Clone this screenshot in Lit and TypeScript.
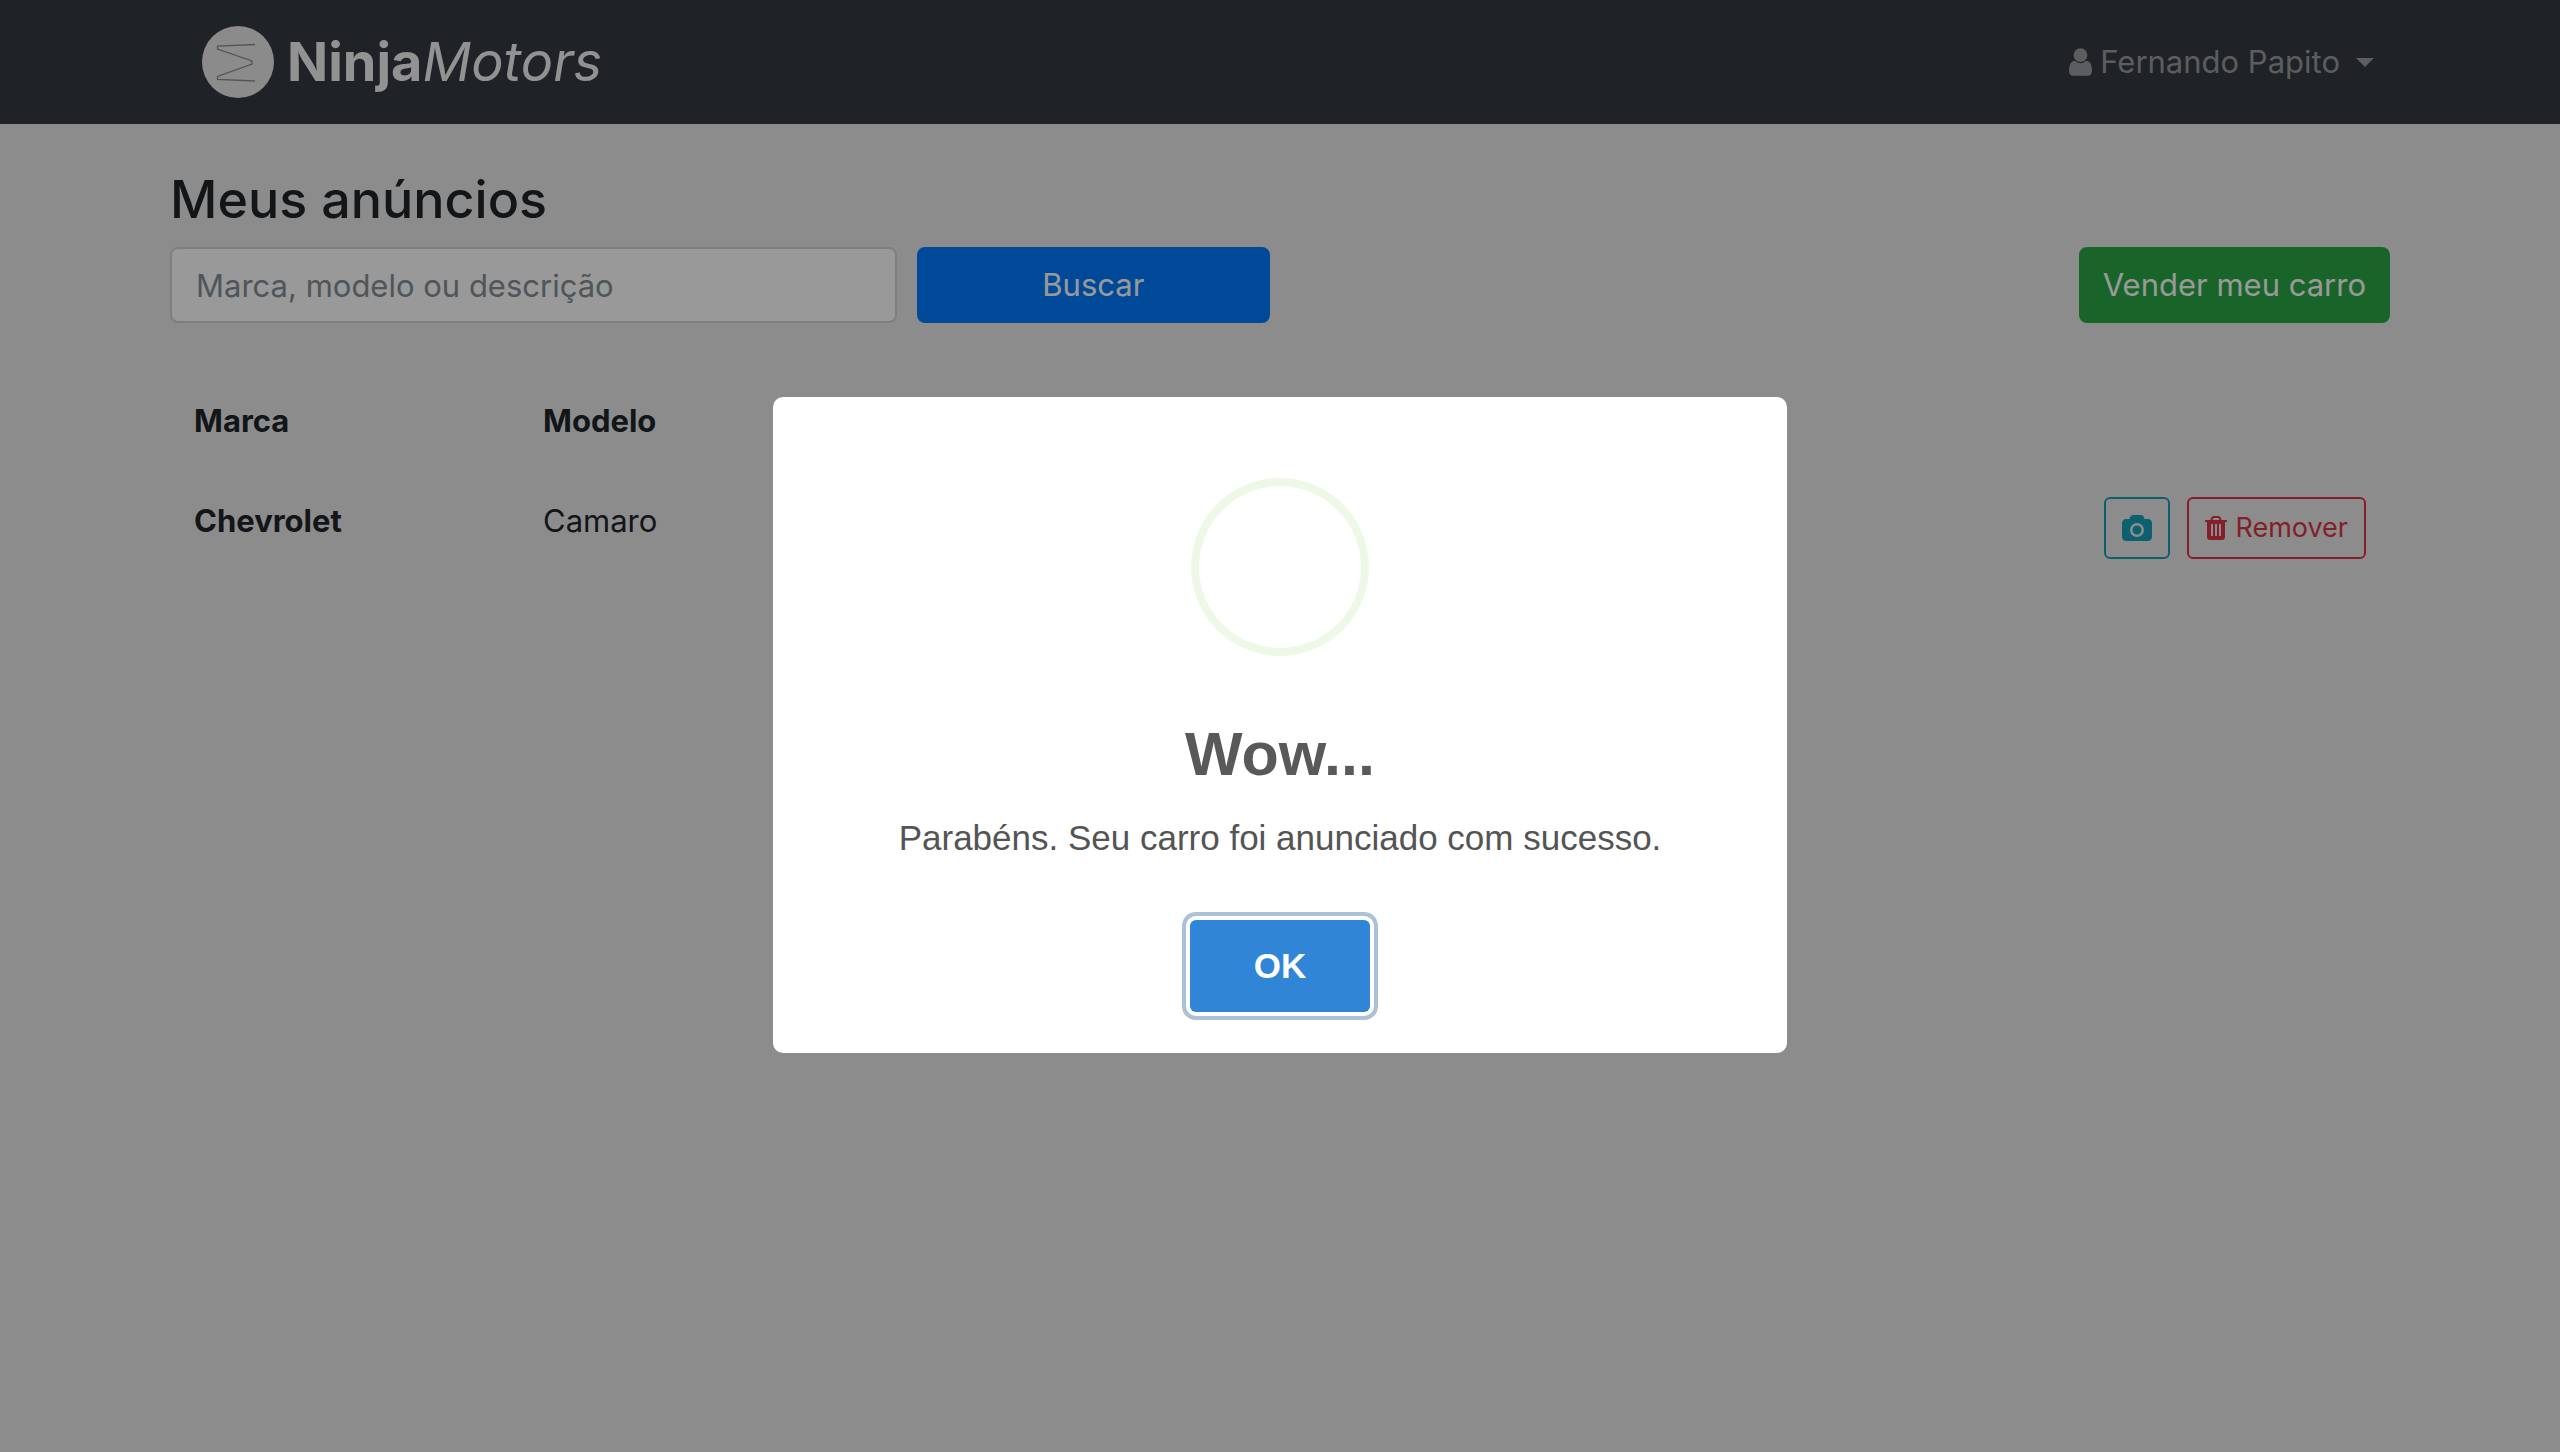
import { LitElement, html, css, svg } from "lit";
import { customElement, state } from "lit/decorators.js";

interface Ad {
  brand: string;
  model: string;
}

const userIcon = svg`<path d="M1280 1399q0 109-62.5 187t-150.5 78h-854q-88 0-150.5-78t-62.5-187q0-85 8.5-160.5t31.5-152 58.5-131 94-89 134.5-34.5q131 128 313 128t313-128q76 0 134.5 34.5t94 89 58.5 131 31.5 152 8.5 160.5zM1024 512q0 159-112.5 271.5t-271.5 112.5-271.5-112.5-112.5-271.5 112.5-271.5 271.5-112.5 271.5 112.5 112.5 271.5z"/>`;
const cameraIcon = svg`<path d="M960 672q119 0 203.5 84.5t84.5 203.5-84.5 203.5-203.5 84.5-203.5-84.5-84.5-203.5 84.5-203.5 203.5-84.5zm704-416q106 0 181 75t75 181v896q0 106-75 181t-181 75h-1408q-106 0-181-75t-75-181v-896q0-106 75-181t181-75h224l51-136q19-49 69.5-84.5t103.5-35.5h512q53 0 103.5 35.5t69.5 84.5l51 136h224zm-704 1152q185 0 316.5-131.5t131.5-316.5-131.5-316.5-316.5-131.5-316.5 131.5-131.5 316.5 131.5 316.5 316.5 131.5z"/>`;
const trashIcon = svg`<path d="M512 1376v-704q0-14-9-23t-23-9h-64q-14 0-23 9t-9 23v704q0 14 9 23t23 9h64q14 0 23-9t9-23zm256 0v-704q0-14-9-23t-23-9h-64q-14 0-23 9t-9 23v704q0 14 9 23t23 9h64q14 0 23-9t9-23zm256 0v-704q0-14-9-23t-23-9h-64q-14 0-23 9t-9 23v704q0 14 9 23t23 9h64q14 0 23-9t9-23zm-544-992h448l-48-117q-7-9-17-11h-317q-10 2-17 11zm928 32v64q0 14-9 23t-23 9h-96v948q0 83-47 143.5t-113 60.5h-832q-66 0-113-58.5t-47-141.5v-952h-96q-14 0-23-9t-9-23v-64q0-14 9-23t23-9h309l70-167q15-37 54-63t79-26h320q40 0 79 26t54 63l70 167h309q14 0 23 9t9 23z"/>`;

@customElement("app-root")
export class AppRoot extends LitElement {
  @state() private dialogOpen = true;
  @state() private ads: Ad[] = [{ brand: "Chevrolet", model: "Camaro" }];

  static styles = css`
    :host {
      display: block;
      min-height: 100vh;
      background: #eaeaea;
      color: #212529;
      font-family: Inter, "Liberation Sans", sans-serif;
      font-size: 31px;
      line-height: 48px;
    }
    * {
      box-sizing: border-box;
    }
    button,
    input {
      font: inherit;
      margin: 0;
    }
    button {
      cursor: pointer;
    }
    svg {
      display: block;
      fill: currentColor;
      flex: none;
    }
    .container {
      max-width: 2220px;
      margin: 0 auto;
    }
    .navbar {
      background: #343a40;
    }
    .bar {
      display: flex;
      align-items: center;
      justify-content: space-between;
      padding: 0 16px 0 32px;
      height: 124px;
    }
    .brand {
      display: flex;
      align-items: center;
      gap: 13px;
      color: #f4f4f4;
      text-decoration: none;
      font-size: 54px;
      line-height: 64px;
    }
    .brand b {
      font-weight: 700;
    }
    .brand i {
      font-weight: 400;
    }
    .user {
      display: flex;
      align-items: center;
      gap: 8px;
      padding: 0;
      border: 0;
      background: none;
      color: #9a9c9e;
    }
    .caret {
      margin-left: 8px;
      border: 9px solid transparent;
      border-top-color: currentColor;
      border-bottom: 0;
    }
    h1 {
      margin: 0;
      padding: 42px 0 14px;
      font-size: 52px;
      line-height: 67px;
      font-weight: 500;
    }
    .search {
      display: grid;
      grid-template-columns: repeat(12, 1fr);
      gap: 20px;
    }
    .field {
      grid-column: span 4;
      min-width: 0;
      height: 76px;
      padding: 0 24px;
      border: 2px solid #ced4da;
      border-radius: 8px;
      background: #fff;
      color: #495057;
    }
    .field::placeholder {
      color: #868e96;
      opacity: 1;
    }
    .btn {
      display: flex;
      align-items: center;
      justify-content: center;
      height: 76px;
      padding: 0 22px;
      border: 2px solid;
      border-radius: 8px;
      color: #fff;
      white-space: nowrap;
    }
    .primary {
      grid-column: span 2;
      background: #007bff;
      border-color: #007bff;
    }
    .success {
      grid-column: span 6;
      justify-self: end;
      background: #28a745;
      border-color: #28a745;
    }
    table {
      width: 100%;
      margin-top: 50px;
      border-collapse: collapse;
      table-layout: fixed;
    }
    th,
    td {
      padding: 24px;
      text-align: left;
      vertical-align: top;
    }
    th {
      font-weight: 700;
    }
    thead th,
    thead td {
      border-bottom: 4px solid #e9e9e9;
    }
    .col {
      width: 349px;
    }
    .actions {
      display: flex;
      justify-content: flex-end;
      gap: 17px;
    }
    .small {
      height: 62px;
      padding: 0 16px;
      gap: 8px;
      border-radius: 6px;
      background: none;
      font-size: 27px;
    }
    .info {
      color: #17a2b8;
      border-color: #17a2b8;
    }
    .danger {
      color: #dc3545;
      border-color: #dc3545;
    }
    .backdrop {
      position: fixed;
      inset: 0;
      display: flex;
      align-items: center;
      justify-content: center;
      padding-bottom: 2px;
      background: rgba(0, 0, 0, 0.4);
    }
    .dialog {
      display: flex;
      flex-direction: column;
      align-items: center;
      width: 1014px;
      max-width: 96%;
      padding: 81px 40px 41px;
      border-radius: 10px;
      background: #fff;
      font-family: "Liberation Sans", sans-serif;
      text-align: center;
    }
    .ring {
      width: 178px;
      height: 178px;
      border: 8px solid #edf8e7;
      border-radius: 50%;
    }
    .dialog h2 {
      margin: 60px 0 0;
      color: #595959;
      font-size: 61px;
      line-height: 76px;
      font-weight: 700;
    }
    .dialog p {
      margin: 20px 0 56px;
      color: #545454;
      font-size: 35px;
      line-height: 52px;
    }
    .ok {
      width: 180px;
      height: 92px;
      border: 0;
      border-radius: 6px;
      background: #3085d6;
      color: #fff;
      font-size: 35px;
      font-weight: 700;
      outline: none;
      box-shadow: 0 0 0 4px #fff, 0 0 0 8px #abc1d8;
    }
  `;

  private close() {
    this.dialogOpen = false;
  }

  private remove(ad: Ad) {
    this.ads = this.ads.filter((item) => item !== ad);
  }

  private renderRow(ad: Ad) {
    return html`<tr>
      <th scope="row">${ad.brand}</th>
      <td>${ad.model}</td>
      <td>
        <div class="actions">
          <button class="btn small info" type="button" aria-label="Fotos">
            <svg width="30" height="26" viewBox="0 0 1920 1664">${cameraIcon}</svg>
          </button>
          <button class="btn small danger" type="button" @click=${() => this.remove(ad)}>
            <svg width="22" height="24" viewBox="0 128 1408 1536">${trashIcon}</svg>
            Remover
          </button>
        </div>
      </td>
    </tr>`;
  }

  private renderDialog() {
    return html`<div class="backdrop">
      <div class="dialog" role="dialog" aria-modal="true" aria-labelledby="title">
        <div class="ring"></div>
        <h2 id="title">Wow...</h2>
        <p>Parabéns. Seu carro foi anunciado com sucesso.</p>
        <button class="ok" type="button" @click=${this.close}>OK</button>
      </div>
    </div>`;
  }

  render() {
    return html`
      <header class="navbar">
        <div class="container bar">
          <a class="brand" href="#">
            <svg width="72" height="72" viewBox="0 0 72 72">
              <circle cx="36" cy="36" r="36" fill="#e8e8e8" />
              <path d="M53 18.500 15.500 20V23L50 35V38L15.500 50.500V53.500L53 55" fill="none" stroke="#8c8c8c" stroke-width="1.300" />
            </svg>
            <span><b>Ninja</b><i>Motors</i></span>
          </a>
          <button class="user" type="button" aria-haspopup="menu">
            <svg width="23" height="28" viewBox="0 128 1280 1536">${userIcon}</svg>
            Fernando Papito
            <span class="caret"></span>
          </button>
        </div>
      </header>
      <main class="container">
        <h1>Meus anúncios</h1>
        <form class="search" @submit=${(e: Event) => e.preventDefault()}>
          <input class="field" type="search" aria-label="Buscar anúncios" placeholder="Marca, modelo ou descrição" />
          <button class="btn primary" type="submit">Buscar</button>
          <button class="btn success" type="button">Vender meu carro</button>
        </form>
        <table>
          <thead>
            <tr>
              <th class="col" scope="col">Marca</th>
              <th class="col" scope="col">Modelo</th>
              <td></td>
            </tr>
          </thead>
          <tbody>
            ${this.ads.map((ad) => this.renderRow(ad))}
          </tbody>
        </table>
      </main>
      ${this.dialogOpen ? this.renderDialog() : ""}
    `;
  }
}
